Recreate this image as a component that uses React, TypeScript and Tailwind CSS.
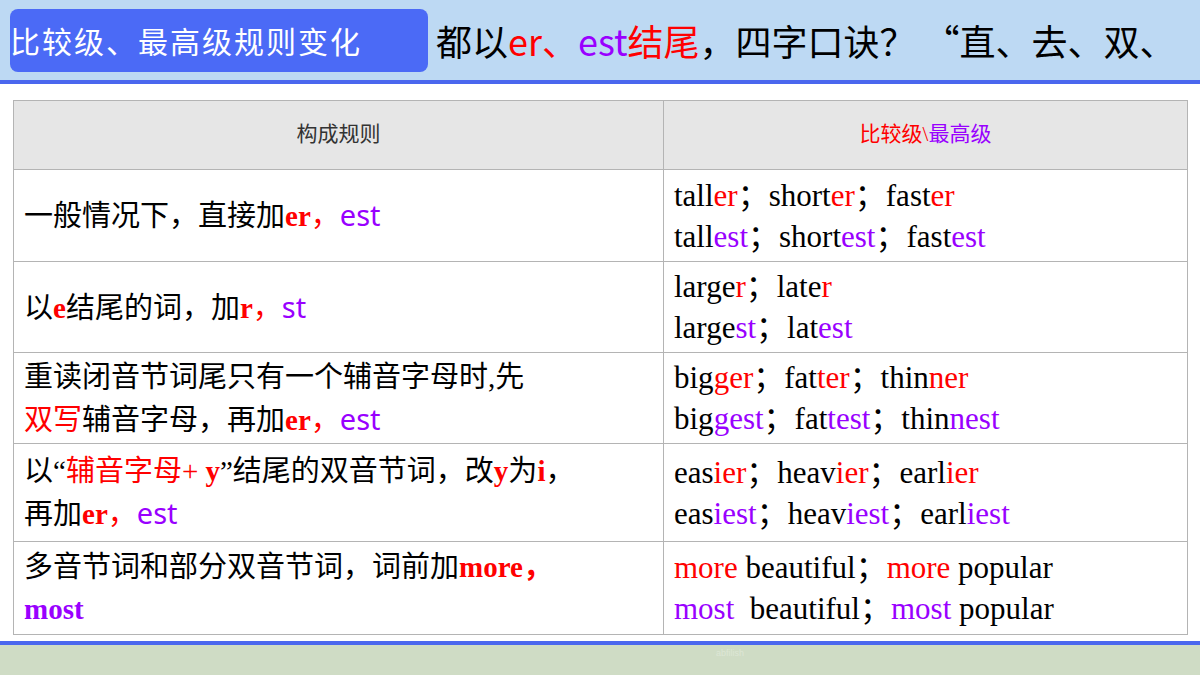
const R = 'text-[#ff0000]';
const P = 'text-[#9900ff]';
const S = `${P} font-[Noto_Sans,sans-serif]`;

const rows: { left: React.ReactNode; right: React.ReactNode[] }[] = [
  {
    left: (
      <>
        一般情况下，直接加<b className={R}>er</b>
        <span className={R}>，</span>
        <span className={S}>est</span>
      </>
    ),
    right: [
      <>tall<span className={R}>er</span>；short<span className={R}>er</span>；fast<span className={R}>er</span></>,
      <>tall<span className={P}>est</span>；short<span className={P}>est</span>；fast<span className={P}>est</span></>,
    ],
  },
  {
    left: (
      <>
        以<b className={R}>e</b>结尾的词，加<b className={R}>r</b>
        <span className={R}>，</span>
        <span className={S}>st</span>
      </>
    ),
    right: [
      <>large<span className={R}>r</span>；late<span className={R}>r</span></>,
      <>large<span className={P}>st</span>；lat<span className={P}>est</span></>,
    ],
  },
  {
    left: (
      <>
        重读闭音节词尾只有一个辅音字母时,先
        <br />
        <span className={R}>双写</span>辅音字母，再加<b className={R}>er</b>
        <span className={R}>，</span>
        <span className={S}>est</span>
      </>
    ),
    right: [
      <>big<span className={R}>ger</span>；fat<span className={R}>ter</span>；thin<span className={R}>ner</span></>,
      <>big<span className={P}>gest</span>；fat<span className={P}>test</span>；thin<span className={P}>nest</span></>,
    ],
  },
  {
    left: (
      <>
        以“<span className={R}>辅音字母+ <b>y</b></span>”结尾的双音节词，改<b className={R}>y</b>为<b className={R}>i</b>，
        <br />
        再加<b className={R}>er</b>
        <span className={R}>，</span>
        <span className={S}>est</span>
      </>
    ),
    right: [
      <>eas<span className={R}>ier</span>；heav<span className={R}>ier</span>；earl<span className={R}>ier</span></>,
      <>eas<span className={P}>iest</span>；heav<span className={P}>iest</span>；earl<span className={P}>iest</span></>,
    ],
  },
  {
    left: (
      <>
        多音节词和部分双音节词，词前加<b className={R}>more，</b>
        <br />
        <b className={P}>most</b>
      </>
    ),
    right: [
      <><span className={R}>more</span> beautiful；<span className={R}>more</span> popular</>,
      <><span className={P}>most</span>&nbsp; beautiful；<span className={P}>most</span> popular</>,
    ],
  },
];

const heights = ['h-[92px]', 'h-[91px]', 'h-[91px]', 'h-[98px]', 'h-[93px]'];

export default function App() {
  return (
    <div className="w-[1200px] h-[675px] flex flex-col bg-white overflow-hidden font-[Liberation_Serif,Noto_Sans_CJK_SC,serif]">
      <div className="h-[84px] shrink-0 bg-[#bdd9f3] flex items-center pl-[10px] gap-[8px] border-b-[4px] border-[#4a67ee] whitespace-nowrap">
        <div className="w-[418px] h-[63px] rounded-[8px] bg-[#4b6af6] text-white text-[30px] tracking-[2px] flex items-center font-[Noto_Sans_CJK_SC,sans-serif]">
          比较级、最高级规则变化
        </div>
        <div className="text-[36px] text-black font-[Noto_Sans_CJK_SC,sans-serif]">
          都以<span className={R}>er、</span><span className={P}>est</span><span className={R}>结尾</span>，四字口诀？ “直、去、双、
        </div>
      </div>
      <div className="flex-1 pt-[16px] px-[13px]">
        <div className="w-[1175px] border border-[#b4b4b4] font-[Liberation_Serif,Noto_Sans_CJK_SC,serif]">
          <div className="h-[68px] flex bg-[#e6e6e6] text-[21px]">
            <div className="w-[650px] flex items-center justify-center text-[#333] border-r border-[#b4b4b4]">构成规则</div>
            <div className="flex-1 flex items-center justify-center">
              <span className={R}>比较级\</span><span className={P}>最高级</span>
            </div>
          </div>
          {rows.map((r, i) => (
            <div key={i} className={`flex border-t border-[#b4b4b4] ${heights[i]}`}>
              <div className="w-[650px] flex items-center pl-[10px] text-[29px] leading-[42px] border-r border-[#b4b4b4] whitespace-nowrap">
                <span>{r.left}</span>
              </div>
              <div className="flex-1 flex flex-col justify-center pl-[10px] text-[31px] leading-[41px] whitespace-nowrap">
                {r.right.map((l, j) => (
                  <div key={j}>{l}</div>
                ))}
              </div>
            </div>
          ))}
        </div>
      </div>
      <div className="h-[34px] shrink-0 border-t-[4px] border-[#4a67ee] bg-[#cfdcc5] flex justify-center">
        <span className="text-[9px] text-[#dde6d5] ml-[260px] mt-[2px] font-[Liberation_Sans,sans-serif]">abfilish</span>
      </div>
    </div>
  );
}
